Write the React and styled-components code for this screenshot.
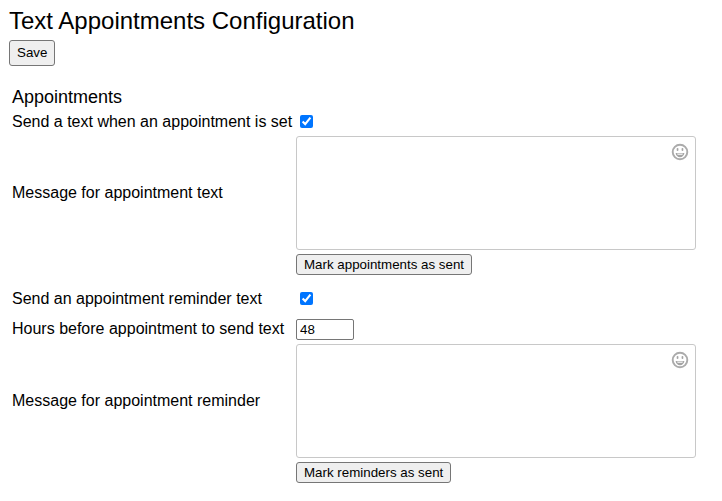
import React from 'react'
import styled, { createGlobalStyle } from 'styled-components'

const GlobalStyle = createGlobalStyle`
  html, body {
    margin: 0;
    padding: 0;
    background: #fff;
    color: #000;
    font-family: "Liberation Sans", Arial, sans-serif;
  }
`

const Page = styled.div`
  padding: 7px 9px;
  width: 722px;
  box-sizing: border-box;
`

const Title = styled.h1`
  margin: 0 0 5px;
  font-size: 24px;
  font-weight: 400;
  line-height: 28px;
`

const Button = styled.button`
  display: block;
  box-sizing: border-box;
  height: ${(p) => p.$height}px;
  padding: 0 ${(p) => p.$pad}px ${(p) => p.$lift || 0}px;
  font-family: "Liberation Sans", Arial, sans-serif;
  font-size: 13.33px;
  color: #000;
  background: #efefef;
  border: 1px solid #767676;
  border-radius: 3px;
`

const Form = styled.div`
  display: grid;
  grid-template-columns: 284px 400px;
  column-gap: 0;
  margin: 20px 0 0 3px;
`

const Heading = styled.h2`
  grid-column: 1 / 3;
  margin: 0;
  font-size: 18px;
  font-weight: 400;
  line-height: 22px;
`

const Label = styled.label`
  display: flex;
  align-items: center;
  box-sizing: border-box;
  font-size: 16px;
  height: ${(p) => p.$height}px;
  margin-top: ${(p) => p.$top || 0}px;
  padding-bottom: ${(p) => p.$lift || 0}px;
  white-space: nowrap;
`

const Field = styled.div`
  display: flex;
  align-items: center;
  height: ${(p) => p.$height}px;
  margin-top: ${(p) => p.$top || 0}px;
`

const Check = styled.input.attrs({ type: 'checkbox' })`
  width: 13px;
  height: 13px;
  margin: 0 0 ${(p) => p.$lift || 0}px 4px;
  accent-color: #0075ff;
`

const MessageBox = styled.div`
  position: relative;
  height: 114px;
  width: 400px;
`

const Message = styled.textarea`
  display: block;
  box-sizing: border-box;
  width: 100%;
  height: 100%;
  resize: none;
  background: #fff;
  border: 1px solid #c8c8c8;
  border-radius: 3px;
`

const Smiley = styled.svg`
  position: absolute;
  top: 7px;
  right: 7px;
  width: 18px;
  height: 18px;
`

const HoursInput = styled.input`
  box-sizing: border-box;
  width: 58px;
  height: 21px;
  padding: 0 3px;
  font-family: "Liberation Sans", Arial, sans-serif;
  font-size: 13.33px;
  color: #000;
  background: #fff;
  border: 1px solid #767676;
  border-radius: 2px;
`

function EmojiField() {
  return (
    <MessageBox>
      <Message />
      <Smiley viewBox="0 0 18 18" fill="none">
        <circle cx="9" cy="9" r="7.3" stroke="#ababab" strokeWidth="1.9" />
        <rect x="5.7" y="4.900" width="1.700" height="3.200" rx=".8" fill="#a4a4a4" />
        <rect x="10.6" y="4.900" width="1.700" height="3.200" rx=".8" fill="#a4a4a4" />
        <path d="M4.6 10h8.8c-.3 2.7-2.1 4.2-4.4 4.2S4.900 12.700 4.600 10z" fill="#a4a4a4" />
        <path d="M6 10.600h6c-.2.700-.4 1-.7 1.300H6.700c-.3-.3-.5-.6-.7-1.300z" fill="#e8e8e8" />
      </Smiley>
    </MessageBox>
  )
}

function App() {
  return (
    <Page>
      <GlobalStyle />
      <Title>Text Appointments Configuration</Title>
      <Button $height={26} $pad={7} $lift={1}>Save</Button>
      <Form>
        <Heading>Appointments</Heading>
        <Label $height={25} $top={1}>Send a text when an appointment is set</Label>
        <Field $height={25} $top={1}><Check defaultChecked /></Field>

        <Label $height={114} $top={2}>Message for appointment text</Label>
        <Field $height={114} $top={2}><EmojiField /></Field>

        <span />
        <Field $height={21} $top={4}>
          <Button $height={21} $pad={7}>Mark appointments as sent</Button>
        </Field>

        <Label $height={24} $top={12}>Send an appointment reminder text</Label>
        <Field $height={24} $top={12}><Check defaultChecked $lift={2} /></Field>

        <Label $height={21} $top={8} $lift={2}>Hours before appointment to send text</Label>
        <Field $height={21} $top={8}><HoursInput defaultValue="48" /></Field>

        <Label $height={114} $top={4}>Message for appointment reminder</Label>
        <Field $height={114} $top={4}><EmojiField /></Field>

        <span />
        <Field $height={21} $top={4}>
          <Button $height={21} $pad={7}>Mark reminders as sent</Button>
        </Field>
      </Form>
    </Page>
  )
}

export default App
